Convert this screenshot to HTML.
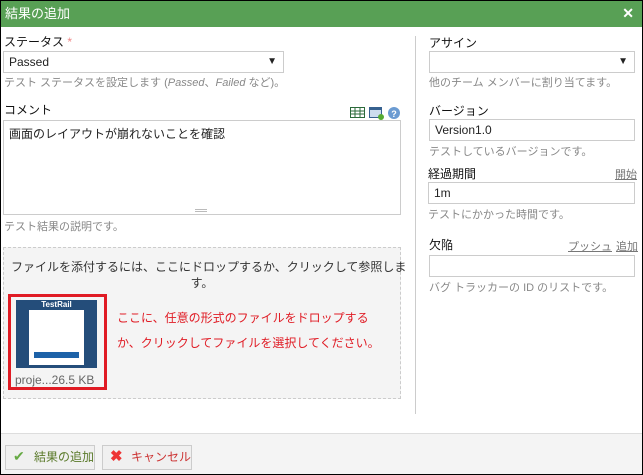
<!DOCTYPE html>
<html><head><meta charset="utf-8"><style>
*{box-sizing:border-box;margin:0;padding:0}
body{width:643px;height:475px;overflow:hidden;font-family:"Liberation Sans","Noto Sans CJK JP",sans-serif;font-size:12px;color:#222;background:#fff}
#w{position:absolute;left:0;top:0;width:643px;height:475px;border:1px solid #000;background:#fff}
.a{position:absolute;white-space:nowrap}
.hdr{left:0;top:0;width:641px;height:26px;background:#58a055;color:#fff;font-size:13px;line-height:26px;padding-left:4px}
.lbl{font-size:12px;color:#111}
.help{font-size:11px;color:#888}
.box{border:1px solid #ccc;background:#fff;font-size:12px;padding-left:5px}
.arr{position:absolute;right:6px;top:0;font-size:10px}
a{color:#777;text-decoration:underline;font-size:11px}
.btn{border:1px solid #ccc;background:#f0f0f0;height:25px;line-height:23px;font-size:12px;padding-left:28px}
</style></head><body><div id="w">
<div class="a hdr">結果の追加</div>
<div class="a" style="right:8px;top:4px;color:#fff;font-weight:bold;font-size:14px">✕</div>

<div class="a lbl" style="left:3px;top:32px">ステータス <span style="color:#e88">*</span></div>
<div class="a box" style="left:2px;top:50px;width:281px;height:22px;line-height:20px">Passed<span class="arr">▼</span></div>
<div class="a help" style="left:3px;top:73px">テスト ステータスを設定します (<i>Passed</i>、<i>Failed</i> など)。</div>

<div class="a lbl" style="left:3px;top:100px">コメント</div>
<svg class="a" style="left:349px;top:105px" width="50" height="14">
<rect x="0.5" y="1.5" width="14" height="10" fill="#fff" stroke="#2b6a3a"/><path d="M0 5h15M0 8h15M5 1v11M10 1v11" stroke="#2b6a3a"/>
<rect x="19.5" y="1.5" width="12" height="10" fill="#cde" stroke="#36618f"/><rect x="19" y="1" width="13" height="3" fill="#36618f"/><circle cx="31" cy="11" r="3" fill="#5a3"/>
<circle cx="44" cy="7" r="6" fill="#6b9bd2"/><text x="44" y="11" font-size="9" fill="#fff" text-anchor="middle" font-weight="bold">?</text></svg>
<div class="a box" style="left:2px;top:119px;width:398px;height:95px;padding:4px 5px;border-color:#ccc">画面のレイアウトが崩れないことを確認</div>
<div class="a" style="left:194px;top:208px;width:12px;border-top:1px solid #bbb;height:3px;border-bottom:1px solid #bbb"></div>
<div class="a help" style="left:3px;top:217px">テスト結果の説明です。</div>

<div class="a" style="left:2px;top:246px;width:398px;height:152px;border:1px dashed #ccc;background:#f4f4f4"></div>
<div class="a" style="left:10px;top:258px;width:382px;text-align:center;font-size:12px;color:#333;line-height:16px">ファイルを添付するには、ここにドロップするか、クリックして参照しま<br>す。</div>
<div class="a" style="left:7px;top:293px;width:99px;height:96px;border:3px solid #e01b24"></div>
<div class="a" style="left:15px;top:299px;width:81px;height:68px;background:#244d7a"></div>
<div class="a" style="left:15px;top:299px;width:81px;text-align:center;color:#fff;font-size:8px;font-weight:bold">TestRail</div>
<div class="a" style="left:28px;top:309px;width:55px;height:55px;background:#fff"></div>
<div class="a" style="left:33px;top:351px;width:45px;height:6px;background:#1d62a8"></div>
<div class="a" style="left:14px;top:372px;font-size:12px;color:#666">proje...26.5 KB</div>
<div class="a" style="left:116px;top:305px;color:#e01b24;font-size:12px;line-height:25px">ここに、任意の形式のファイルをドロップする<br>か、クリックしてファイルを選択してください。</div>

<div class="a" style="left:414px;top:35px;width:1px;height:378px;background:#ccc"></div>

<div class="a lbl" style="left:428px;top:33px">アサイン</div>
<div class="a box" style="left:428px;top:50px;width:206px;height:22px;line-height:20px"><span class="arr">▼</span></div>
<div class="a help" style="left:428px;top:73px">他のチーム メンバーに割り当てます。</div>
<div class="a lbl" style="left:428px;top:101px">バージョン</div>
<div class="a box" style="left:428px;top:118px;width:206px;height:22px;line-height:20px">Version1.0</div>
<div class="a help" style="left:428px;top:142px">テストしているバージョンです。</div>
<div class="a lbl" style="left:427px;top:164px">経過期間</div>
<a class="a" style="left:614px;top:165px">開始</a>
<div class="a box" style="left:427px;top:181px;width:207px;height:22px;line-height:20px">1m</div>
<div class="a help" style="left:427px;top:205px">テストにかかった時間です。</div>
<div class="a lbl" style="left:428px;top:235px">欠陥</div>
<a class="a" style="left:567px;top:237px">プッシュ</a><a class="a" style="left:615px;top:237px">追加</a>
<div class="a box" style="left:428px;top:254px;width:206px;height:22px"></div>
<div class="a help" style="left:428px;top:278px">バグ トラッカーの ID のリストです。</div>

<div class="a" style="left:0;top:432px;width:641px;height:41px;background:#f4f4f4;border-top:1px solid #ddd"></div>
<div class="a btn" style="left:4px;top:444px;width:90px;color:#5a7a2a">結果の追加</div>
<div class="a" style="left:12px;top:447px;color:#6a4;font-size:14px">✔</div>
<div class="a btn" style="left:101px;top:444px;width:90px;color:#c33">キャンセル</div>
<div class="a" style="left:109px;top:446px;color:#e33;font-size:15px;font-weight:bold">✖</div>
</div></body></html>
